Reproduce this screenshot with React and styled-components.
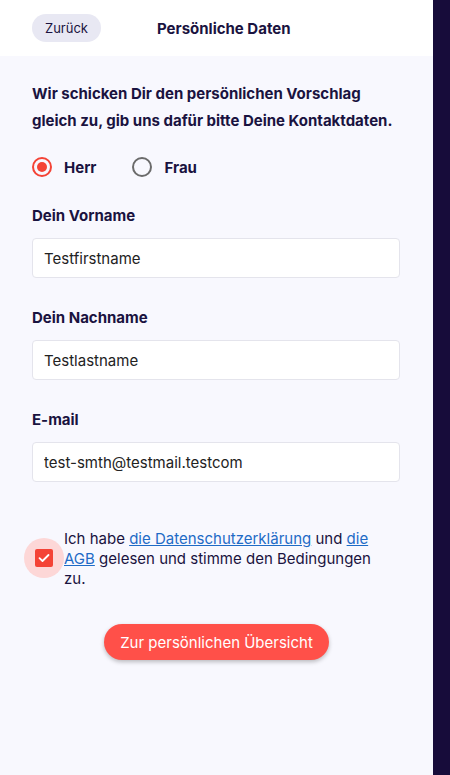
import React, { useState } from "react";
import styled, { createGlobalStyle } from "styled-components";

const Global = createGlobalStyle`
  html, body { margin: 0; padding: 0; height: 100%; }
  body { font-family: "Inter", "Noto Sans", sans-serif; color: #1a1340; background: #170c3a; }
  #root { height: 100%; }
  * { box-sizing: border-box; }
`;

const Shell = styled.div`
  display: flex;
  width: 450px;
  height: 775px;
`;

const Main = styled.main`
  width: 433px;
  display: flex;
  flex-direction: column;
  background: #f8f8fe;
`;

const Side = styled.div`
  flex: 1;
  background: #170c3a;
`;

const Header = styled.header`
  height: 56px;
  background: #ffffff;
  display: flex;
  align-items: center;
  padding: 0 32px;
`;

const BackButton = styled.button`
  height: 28px;
  width: 69px;
  border: none;
  border-radius: 14px;
  background: #e8e8f3;
  color: #1a1340;
  font-family: inherit;
  font-size: 13px;
  padding: 0;
  margin-top: -1px;
`;

const Title = styled.h1`
  margin: 0 0 0 56px;
  font-size: 15px;
  font-weight: 700;
  color: #1a1340;
`;

const Content = styled.div`
  padding: 24px 32px 0 32px;
  display: flex;
  flex-direction: column;
`;

const Intro = styled.p`
  margin: 0;
  font-size: 15px;
  font-weight: 700;
  line-height: 27px;
`;

const RadioRow = styled.div`
  display: flex;
  gap: 36px;
  margin-top: 23px;
  height: 20px;
  align-items: center;
`;

const RadioLabel = styled.label`
  display: flex;
  align-items: center;
  gap: 12px;
  font-size: 15px;
  font-weight: 700;
  cursor: pointer;
`;

const RadioCircle = styled.span`
  width: 20px;
  height: 20px;
  border-radius: 50%;
  border: 2px solid ${(p) => (p.$checked ? "#f44336" : "#6b6b6b")};
  display: flex;
  align-items: center;
  justify-content: center;
  &::after {
    content: "";
    width: 10px;
    height: 10px;
    border-radius: 50%;
    background: ${(p) => (p.$checked ? "#f44336" : "transparent")};
  }
`;

const Field = styled.div`
  display: flex;
  flex-direction: column;
  margin-top: ${(p) => p.$mt}px;
`;

const Label = styled.label`
  font-size: 15px;
  font-weight: 700;
  line-height: 20px;
`;

const Input = styled.input`
  margin-top: 12px;
  height: 40px;
  width: 368px;
  border: 1px solid #e4e4ec;
  border-radius: 4px;
  background: #ffffff;
  padding: 0 11px;
  font-family: inherit;
  font-size: 15px;
  color: #222222;
  outline: none;
`;

const ConsentRow = styled.div`
  display: flex;
  align-items: flex-start;
  margin-top: 47px;
`;

const CheckHalo = styled.span`
  width: 40px;
  height: 40px;
  border-radius: 50%;
  background: #fdd7d7;
  margin-left: -8px;
  margin-top: 9px;
  flex-shrink: 0;
  display: flex;
  align-items: center;
  justify-content: center;
`;

const CheckBox = styled.span`
  width: 18px;
  height: 18px;
  border-radius: 2px;
  background: #f44336;
  display: flex;
  align-items: center;
  justify-content: center;
`;

const ConsentText = styled.p`
  margin: 0;
  font-size: 15px;
  line-height: 20px;
  color: #1a1340;
  width: 330px;
`;

const Link = styled.a`
  color: #1e6bc6;
  text-decoration: underline;
`;

const ButtonRow = styled.div`
  display: flex;
  justify-content: center;
  margin-top: 35px;
`;

const Submit = styled.button`
  height: 36px;
  padding: 0 16px;
  border: none;
  border-radius: 18px;
  background: #ff5049;
  color: #ffffff;
  font-family: inherit;
  font-size: 15px;
  box-shadow: 0 2px 4px rgba(0, 0, 0, 0.25);
`;

export default function App() {
  const [gender, setGender] = useState("herr");
  return (
    <>
      <Global />
      <Shell>
        <Main>
          <Header>
            <BackButton>Zurück</BackButton>
            <Title>Persönliche Daten</Title>
          </Header>
          <Content>
            <Intro>
              Wir schicken Dir den persönlichen Vorschlag gleich zu, gib uns dafür bitte Deine Kontaktdaten.
            </Intro>
            <RadioRow>
              <RadioLabel onClick={() => setGender("herr")}>
                <RadioCircle $checked={gender === "herr"} />
                Herr
              </RadioLabel>
              <RadioLabel onClick={() => setGender("frau")}>
                <RadioCircle $checked={gender === "frau"} />
                Frau
              </RadioLabel>
            </RadioRow>
            <Field $mt={29}>
              <Label>Dein Vorname</Label>
              <Input defaultValue="Testfirstname" />
            </Field>
            <Field $mt={30}>
              <Label>Dein Nachname</Label>
              <Input defaultValue="Testlastname" />
            </Field>
            <Field $mt={30}>
              <Label>E-mail</Label>
              <Input defaultValue="test-smth@testmail.testcom" />
            </Field>
            <ConsentRow>
              <CheckHalo>
                <CheckBox>
                  <svg width="12" height="10" viewBox="0 0 12 10" fill="none">
                    <path d="M1.5 5.2 L4.5 8 L10.5 2" stroke="#fff" strokeWidth="1.8" strokeLinecap="round" strokeLinejoin="round" />
                  </svg>
                </CheckBox>
              </CheckHalo>
              <ConsentText>
                Ich habe <Link href="#">die Datenschutzerklärung</Link> und <Link href="#">die</Link>{" "}
                <Link href="#">AGB</Link> gelesen und stimme den Bedingungen zu.
              </ConsentText>
            </ConsentRow>
            <ButtonRow>
              <Submit>Zur persönlichen Übersicht</Submit>
            </ButtonRow>
          </Content>
        </Main>
        <Side />
      </Shell>
    </>
  );
}
